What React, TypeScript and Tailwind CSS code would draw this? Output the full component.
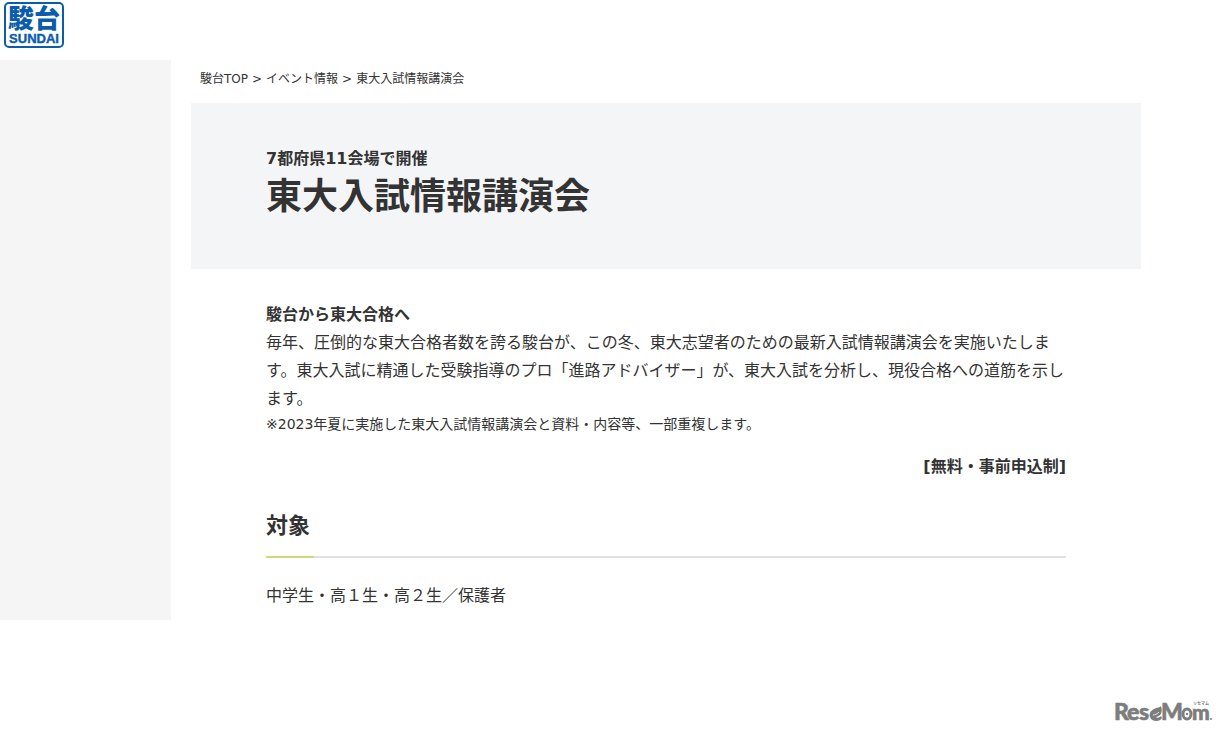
import React from 'react';

const breadcrumbs = [
  { name: '駿台TOP', href: '#top' },
  { name: 'イベント情報', href: '#event' },
];

function SundaiLogo() {
  return (
    <a href="#top" aria-label="駿台 SUNDAI" className="block w-[60px]">
      <svg viewBox="0 0 60 46" className="block w-full" fill="#0b5cad">
        <rect x="1" y="1" width="58" height="44" rx="4" fill="#fff" stroke="#0b5cad" strokeWidth="2" />
        <text
          x="30"
          y="26"
          textAnchor="middle"
          fontSize="26"
          fontWeight="900"
          fontFamily="'Liberation Sans', 'Noto Sans CJK JP', sans-serif"
        >
          駿台
        </text>
        <text
          x="30"
          y="41"
          textAnchor="middle"
          fontSize="13"
          fontWeight="700"
          stroke="#0b5cad"
          strokeWidth="0.4"
          fontFamily="'Liberation Sans', sans-serif"
        >
          SUNDAI
        </text>
      </svg>
    </a>
  );
}

function ReseMomLogo() {
  return (
    <a href="#resemom" aria-label="ReseMom" className="block w-[100px]">
      <svg viewBox="0 0 100 26" className="block w-full overflow-visible" fill="#7d7d7d">
        <g fontFamily="Lato, sans-serif" fontWeight="900" fontSize="23" stroke="#7d7d7d" strokeWidth="0.6">
          <text x="1" y="20">R</text>
          <text x="14" y="20">e</text>
          <text x="26" y="20">s</text>
          <text x="48" y="20">M</text>
          <text x="79" y="20" fontSize="21">m</text>
        </g>
        {/* leaf shaped "e" */}
        <path d="M48 6c-1 2-4 1-7 3-4 2-5 5-4 8 1 3 4 4 6 4 3 0 5-1 6-3l-1-2c-2 2-4 2-5 1 5-1 7-5 5-11z" />
        <path d="M40 15c2 0 4-1 6-3" fill="none" stroke="#fff" strokeWidth="0.8" />
        {/* "o" with an eye */}
        <ellipse cx="74" cy="14" rx="4" ry="5" fill="none" stroke="#7d7d7d" strokeWidth="3" />
        <circle cx="74" cy="14" r="1.2" />
        <circle cx="98" cy="19" r="1" />
        <text x="80" y="5" fontSize="4" fontWeight="700" fontFamily="'Liberation Sans', 'Noto Sans CJK JP', sans-serif">
          リセマム
        </text>
      </svg>
    </a>
  );
}

function Breadcrumb() {
  return (
    <nav aria-label="パンくず" className="px-[9px] text-xs leading-5">
      <ol className="flex flex-wrap gap-1">
        {breadcrumbs.map((item) => (
          <li key={item.name} className="flex gap-1">
            <a href={item.href}>{item.name}</a>
            <span>&gt;</span>
          </li>
        ))}
        <li>東大入試情報講演会</li>
      </ol>
    </nav>
  );
}

export default function App() {
  return (
    <div
      lang="ja"
      className="bg-white text-base leading-7 text-[#333] font-['DejaVu_Sans','Noto_Sans_CJK_JP',sans-serif]"
    >
      <header className="h-[60px] px-1 pt-0.5">
        <SundaiLogo />
      </header>

      <div className="flex">
        <aside className="h-[560px] w-[171px] shrink-0 bg-[#f5f5f5]" />

        <main className="ml-5 max-w-[950px] min-w-0 flex-1 pt-[9px]">
          <Breadcrumb />

          <div className="mt-3.5 bg-[#f4f5f7] px-[75px] pt-[42px] pb-12">
            <p className="font-bold">7都府県11会場で開催</p>
            <h1 className="text-4xl leading-[48px] font-bold">東大入試情報講演会</h1>
          </div>

          <div className="px-[75px] pt-8">
            <h2 className="font-bold">駿台から東大合格へ</h2>
            <p>
              毎年、圧倒的な東大合格者数を誇る駿台が、この冬、東大志望者のための最新入試情報講演会を実施いたします。東大入試に精通した受験指導のプロ「進路アドバイザー」が、東大入試を分析し、現役合格への道筋を示します。
            </p>
            <p className="text-sm leading-[22px]">
              ※2023年夏に実施した東大入試情報講演会と資料・内容等、一部重複します。
            </p>
            <p className="mt-[18px] text-right font-bold">[無料・事前申込制]</p>

            <section className="mt-7">
              <h2 className="text-[22px] leading-[34px] font-bold">対象</h2>
              <div className="mt-[13px] h-0.5 bg-[#dfe1e3]">
                <div className="h-full w-12 bg-[#cddc7b]" />
              </div>
              <p className="mt-6">中学生・高１生・高２生／保護者</p>
            </section>
          </div>
        </main>
      </div>

      <footer className="flex justify-end px-3 pt-20">
        <ReseMomLogo />
      </footer>
    </div>
  );
}
